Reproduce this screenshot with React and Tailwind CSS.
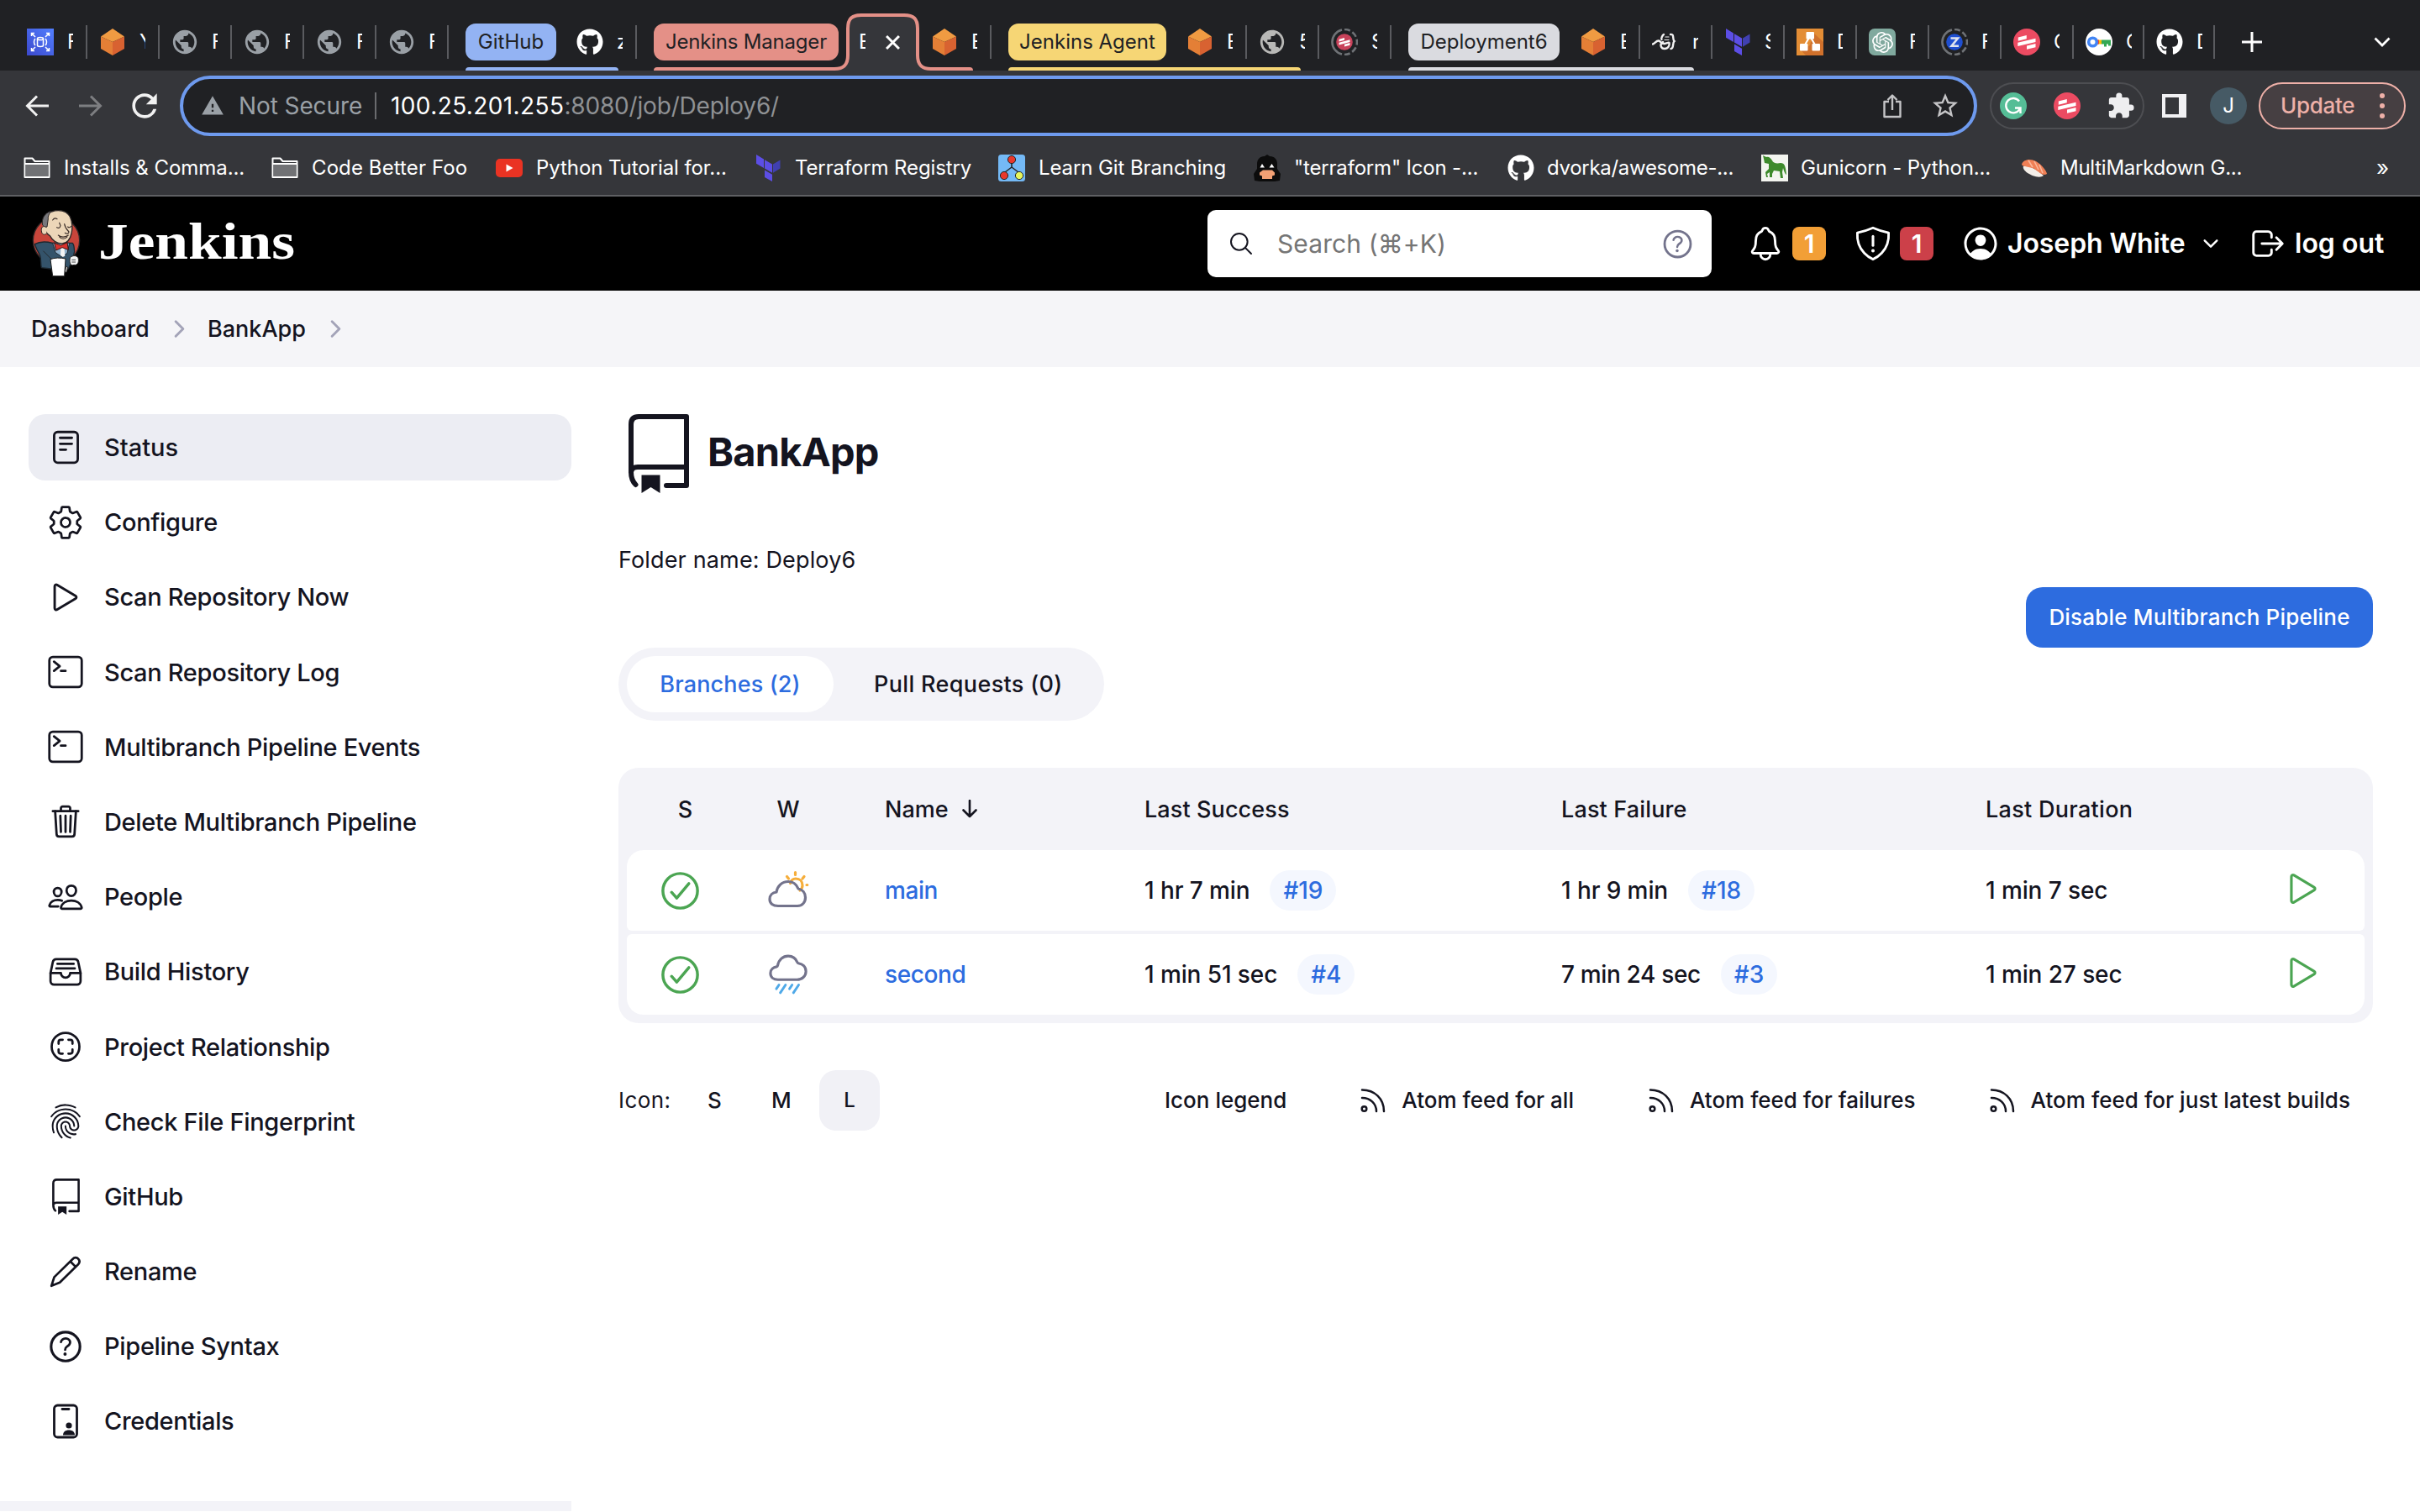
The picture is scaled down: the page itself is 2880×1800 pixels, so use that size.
import React from 'react';
import {
  IoReaderOutline, IoSettingsOutline, IoPlayOutline, IoTerminalOutline, IoTrashOutline, IoPeopleOutline,
  IoFileTrayFullOutline, IoScanCircleOutline, IoFingerPrintOutline, IoHelpCircleOutline,
  IoSearchOutline, IoNotificationsOutline, IoPersonCircleOutline, IoLogOutOutline, IoCheckmarkCircleOutline,
  IoChevronForwardOutline, IoChevronDownOutline,
} from 'react-icons/io5';
import { MdPublic, MdExtension, MdWarning, MdStarBorder, MdRefresh } from 'react-icons/md';
import { SiOpenai } from 'react-icons/si';
import { FaGithub } from 'react-icons/fa';

/* ---------- Browser icons ---------- */

const Globe = ({ light }) => <MdPublic className={light ? 'size-[34px] shrink-0 text-[#b8b8b6]' : 'size-[34px] shrink-0 text-[#9aa0a6]'} />;

const Cube = () => (
  <svg viewBox="0 0 32 32" className="size-8">
    <path d="M16 0 30 9.500 16 16 2 9.500Z" fill="#f09b42" />
    <path d="M2 9.500 16 16V32L2 24Z" fill="#e47f36" />
    <path d="M30 9.500 16 16V32L30 24Z" fill="#d86231" />
  </svg>
);

const Scaling = () => (
  <svg viewBox="0 0 32 32" className="size-8">
    <defs>
      <linearGradient id="scalingFill" x1="0" y1="1" x2="1" y2="0">
        <stop offset="0" stopColor="#3b48cc" />
        <stop offset="1" stopColor="#527fff" />
      </linearGradient>
    </defs>
    <rect width="32" height="32" fill="url(#scalingFill)" />
    <g fill="none" stroke="#fff" strokeWidth="1.5">
      <ellipse cx="16" cy="12" rx="3.5" ry="1.6" />
      <path d="M12.500 12v8c0 2 7 2 7 0v-8M10 12c-2 2-2 6 0 8M22 12c2 2 2 6 0 8" />
      <path d="M5.500 9V5.500H9M5.500 5.500 10 10M23 5.500h3.500V9M26.500 5.500 22 10M5.500 23v3.500H9M5.500 26.500 10 22M23 26.500h3.500V23M26.500 26.500 22 22" />
    </g>
  </svg>
);

const GitHub = () => <FaGithub className="size-8 text-white" />;

const Terraform = () => (
  <svg viewBox="0 0 32 32" className="size-8">
    <path d="M2 0 11 5.500V16L2 10.800ZM12 6.300l9 5.200V21.800l-9-5.200ZM12 18.500l9 5.200V32l-9-5Z" fill="#5c4ee5" />
    <path d="M22 11.500 30.500 6.500V16.600L22 21.800Z" fill="#4040b2" />
  </svg>
);

const Stripes = ({ className = 'size-8' }) => (
  <svg viewBox="0 0 32 32" className={className}>
    <circle cx="16" cy="16" r="16" fill="#ec4b62" />
    <path d="M5.800 10.600 15.800 8v4.200L5.800 14.800ZM5.300 16.800 26.500 11.700v4.200L5.300 21ZM16 20.600 26.500 18v4.200L16 24.800Z" fill="#fff" />
  </svg>
);

const DimStripes = () => (
  <svg viewBox="0 0 32 32" className="size-8">
    <path d="M13 1.400A15 15 0 0 0 13 30.600" fill="none" stroke="#6f7276" strokeWidth="2.600" />
    <path d="M16 1A15 15 0 0 1 16 31" fill="none" stroke="#6f7276" strokeWidth="2.600" strokeDasharray="7 3" />
    <circle cx="16" cy="16" r="9.800" fill="#c8425a" />
    <path d="M9.500 12.800 16 11v2.800l-6.500 1.800ZM9.500 16.800 22.500 13.300v2.800L9.500 19.600ZM16 18.800l6.500-1.800v2.800L16 21.600Z" fill="#fff" />
  </svg>
);

const Zed = () => (
  <svg viewBox="0 0 32 32" className="size-8">
    <path d="M13 1.400A15 15 0 0 0 13 30.600" fill="none" stroke="#6f7276" strokeWidth="2.600" />
    <path d="M16 1A15 15 0 0 1 16 31" fill="none" stroke="#6f7276" strokeWidth="2.600" strokeDasharray="7 3" />
    <circle cx="16" cy="16" r="9.800" fill="#1f4fd0" />
    <path d="M11.500 11.500h8.500L12.500 20.800h8.500" fill="none" stroke="#dfe3ee" strokeWidth="2.600" />
  </svg>
);

const Flask = () => (
  <svg viewBox="0 0 32 32" className="size-8" fill="none" stroke="#f1f1f1" strokeLinecap="round">
    <path d="M1 18.500c3-1 4-4.500 7-4 3 1 3 4 7 3.500 3-.5 5-2 5.500-1 .5 3-1 7-5.500 7-5 0-6-6-2-8" strokeWidth="2.400" />
    <path d="M11.500 13c-1-1 1-5 2.500-6M22 7c5-1 2 6 4.500 8-2.500 2 0 9-4 9" strokeWidth="2.400" />
    <path d="M16 10h4M15 13.500h5" strokeWidth="1.200" />
  </svg>
);

const Diagrams = () => (
  <svg viewBox="0 0 32 32" className="size-8">
    <rect width="32" height="32" fill="#e38d35" />
    <path d="M20 5 32 16v16H11L5 25.500 16 20Z" fill="#d0712c" />
    <path d="M16 9 8.500 22M16 9l7.500 13" stroke="#fff" strokeWidth="2.200" />
    <rect x="11.500" y="4" width="9.500" height="8.500" rx="1" fill="#fff" />
    <rect x="4" y="18" width="9.500" height="8.500" rx="1" fill="#fff" />
    <rect x="18.500" y="18" width="9.500" height="8.500" rx="1" fill="#fff" />
  </svg>
);

const ChatGpt = () => (
  <span className="flex size-8 items-center justify-center rounded-[7px] rounded-br-none bg-[#80a99e]">
    <SiOpenai className="size-[25px] text-white" />
  </span>
);

const Key = () => (
  <svg viewBox="0 0 32 32" className="size-8">
    <circle cx="16" cy="16" r="16" fill="#fff" />
    <path d="M14 13.500h5v5h-5Z" fill="#fbbc04" />
    <path d="M12 13.500h4v5h-4Z" fill="#ea4335" />
    <path d="M19 13.500h11v7h-3v-2h-2v3h-3v-3h-3Z" fill="#34a853" />
    <circle cx="8.500" cy="16" r="4.800" fill="none" stroke="#4285f4" strokeWidth="3.600" />
  </svg>
);

const Folder = () => (
  <svg viewBox="0 0 32 32" className="size-8">
    <path d="M1.500 4.500h9l3 3.500h17v19h-29Z" fill="#35363a" stroke="#fff" strokeWidth="2" strokeLinejoin="round" />
    <path d="M2.500 12h27v14h-27Z" fill="#717275" />
    <path d="M1.500 11h29" stroke="#fff" strokeWidth="2" />
  </svg>
);

const YouTube = () => (
  <svg viewBox="0 0 32 32" className="size-8">
    <rect y="5" width="32" height="22" rx="5" fill="#ea3323" />
    <path d="M12.500 11.500v9l8-4.500Z" fill="#fff" />
  </svg>
);

const GitBranching = () => (
  <svg viewBox="0 0 32 32" className="size-8">
    <rect width="32" height="32" rx="3.500" fill="#74b9f5" />
    <path d="M16 10v5M16 15l-8 6M16 15l8 6" fill="none" stroke="#222" strokeWidth="1.500" />
    <circle cx="16" cy="6" r="4.600" fill="#e8382c" stroke="#222" />
    <circle cx="7" cy="25" r="4.600" fill="#e8382c" stroke="#222" />
    <circle cx="25" cy="25" r="4.600" fill="#e6f65c" stroke="#222" />
  </svg>
);

const Ninja = () => (
  <svg viewBox="0 0 32 32" className="size-8">
    <path d="M13 2l3-2 3 2c6 0 9 4 9 9v6l4 6-1 8-6 1H7l-6-1-1-8 4-6v-6c0-5 3-9 9-9Z" fill="#0c0c0c" />
    <path d="M7.500 15.500 10 11l3 4.500ZM18.500 15.500 21.500 11l3 4.500Z" fill="#fff" />
    <path d="M11 18.500h11l3 3v3l-3 1v3.500H10V25.500l-3-1v-3Z" fill="#f2a074" />
  </svg>
);

const Gunicorn = () => (
  <svg viewBox="0 0 32 32" className="size-8">
    <rect width="32" height="32" fill="#f4f5f0" />
    <path d="M2 1 6 3c3-1 5 1 7 4 1 3 5 4 10 3 5 0 6 4 7 14-2-1-3-5-4-8l-1 5 1 7h-3l-1-8-7-1-2 4v4h-3v-6l-3 2 1 4H6l-1-6 4-4V11L4 10 3 5Z" fill="#3e8a2c" />
  </svg>
);

const Sushi = () => (
  <svg viewBox="0 0 32 32" className="size-8">
    <path d="M4 14c6-2 16 4 24 11-5 4-14 0-19-3-4-3-6-6-5-8Z" fill="#f3eee8" />
    <path d="M2 12C3 6 12 4 19 8c7 4 13 12 13 15-5 3-9-2-15-6C11 14 4 15 2 12Z" fill="#ef7f55" />
    <path d="m10 7 5 8M17 8l5 10M23 12l4 10" stroke="#f9b79b" strokeWidth="1.600" />
  </svg>
);

/* ---------- Browser tab strip ---------- */

const Tab = ({ icon, text, narrow }) => (
  <div className={narrow ? 'flex h-full w-[84px] shrink-0 items-center pl-[14px]' : 'flex h-full w-[86px] shrink-0 items-center pl-[14px]'}>
    <span className="flex size-8 shrink-0 items-center justify-center">{icon}</span>
    <span className="ml-4 w-[7px] overflow-hidden text-[24px] leading-none text-white">{text}</span>
    <span className="ml-auto h-10 w-[2px] bg-[#5a5b5f]" />
  </div>
);

const ActiveTab = () => (
  <div className="relative z-10 ml-[9px] flex h-full w-[87px] shrink-0 items-center pl-[15px]">
    <svg viewBox="0 0 119 68" className="absolute bottom-0 left-[-16px] h-[68px] w-[119px]">
      <path d="M0 66H2C13 66 18 61 18 50V18C18 6 23 2 34 2H85C96 2 101 6 101 18V50C101 61 106 66 117 66H119V68H0Z" fill="#35363a" />
      <path d="M0 66H2C13 66 18 61 18 50V18C18 6 23 2 34 2H85C96 2 101 6 101 18V50C101 61 106 66 117 66H119" fill="none" stroke="#e49087" strokeWidth="4" />
    </svg>
    <span className="relative w-[8px] overflow-hidden text-[24px] leading-none text-white">B</span>
    <svg viewBox="0 0 16 16" className="relative ml-[24px] size-[17px]">
      <path d="m1 1 14 14M15 1 1 15" stroke="#fff" strokeWidth="2.800" />
    </svg>
  </div>
);

const Group = ({ name, pill, line, children }) => (
  <div className="relative ml-5 flex h-full shrink-0 items-center">
    <span className={`flex h-11 shrink-0 items-center justify-center rounded-[12px] text-[24px] leading-none text-[#202124] ${pill}`}>{name}</span>
    {children}
    <span className={`absolute bottom-0 left-0 right-[22px] h-1 rounded-t-[4px] ${line}`} />
  </div>
);

const TabStrip = () => (
  <div className="flex h-[84px] items-end bg-[#202124] pl-[18px]">
    <div className="flex h-[68px] items-center">
      <Tab icon={<Scaling />} text="F" />
      <Tab icon={<Cube />} text="Y" />
      <Tab icon={<Globe />} text="F" />
      <Tab icon={<Globe />} text="F" />
      <Tab icon={<Globe />} text="F" />
      <Tab icon={<Globe />} text="F" />
      <Group name="GitHub" pill="w-[108px] mr-[10px] bg-[#93b3f3]" line="bg-[#93b3f3]">
        <Tab icon={<GitHub />} text="z" />
      </Group>
      <Group name="Jenkins Manager" pill="w-[220px] bg-[#e49087] tracking-[-0.2px]" line="bg-[#e49087]">
        <ActiveTab />
        <Tab icon={<Cube />} text="E" />
      </Group>
      <Group name="Jenkins Agent" pill="w-[188px] mr-[10px] bg-[#f6d675]" line="bg-[#f6d675]">
        <Tab icon={<Cube />} text="E" />
        <Tab icon={<Globe light />} text="5" />
      </Group>
      <Tab icon={<DimStripes />} text="S" />
      <Group name="Deployment6" pill="w-[180px] mr-[10px] bg-[#dadbe0]" line="bg-[#dadbe0]">
        <Tab icon={<Cube />} text="E" />
        <Tab icon={<Flask />} text="r" />
      </Group>
      <Tab icon={<Terraform />} text="S" />
      <Tab icon={<Diagrams />} text="D" />
      <Tab icon={<ChatGpt />} text="F" />
      <Tab icon={<Zed />} text="F" />
      <Tab icon={<Stripes />} text="C" />
      <Tab icon={<Key />} text="C" narrow />
      <Tab icon={<GitHub />} text="D" narrow />
      <svg viewBox="0 0 24 24" className="ml-8 size-6">
        <path d="M12 0v24M0 12h24" stroke="#fff" strokeWidth="3" />
      </svg>
      <svg viewBox="0 0 20 12" className="ml-[133px] h-3 w-5">
        <path d="m1.500 1.500 8.500 8.500 8.500-8.500" fill="none" stroke="#fff" strokeWidth="2.800" />
      </svg>
    </div>
  </div>
);

/* ---------- Browser toolbar ---------- */

const Toolbar = () => (
  <div className="flex h-[84px] items-center pl-[30px]">
    <svg viewBox="0 0 28 26" className="h-[26px] w-7">
      <path d="M28 13H3M14 1.500 2.500 13 14 24.500" fill="none" stroke="#f1f1f1" strokeWidth="3" />
    </svg>
    <svg viewBox="0 0 28 26" className="ml-9 h-[26px] w-7">
      <path d="M0 13h25M14 1.500 25.500 13 14 24.500" fill="none" stroke="#7d7e81" strokeWidth="3" />
    </svg>
    <MdRefresh className="ml-[28px] size-[44px] text-[#f1f1f1]" />
    <div className="ml-[20px] flex h-[72px] w-[2139px] items-center rounded-full border-4 border-[#6e9aee] bg-[#202124] pl-[21px] pr-[16px] text-[28px] leading-none">
      <MdWarning className="size-[28px] text-[#9aa0a6]" />
      <span className="ml-[17px] w-[148px] tracking-[-0.1px] text-[#9aa0a6]">Not Secure</span>
      <span className="ml-[14px] h-8 w-[2px] bg-[#6a6b6e]" />
      <span className="ml-[17px] text-white tracking-[0.4px]">100.25.201.255</span>
      <span className="tracking-[-0.18px] text-[#8f9194]">:8080/job/Deploy6/</span>
      <svg viewBox="0 0 24 30" className="ml-auto h-[30px] w-6">
        <path d="M8 10H2.500v18h19V10H16M12 20V3M6.500 8 12 2.500 17.500 8" fill="none" stroke="#c4c4c6" strokeWidth="2.400" strokeLinejoin="round" />
      </svg>
      <MdStarBorder className="ml-[33px] size-[36px] text-[#c4c4c6]" />
    </div>
    <div className="ml-[15px] flex h-14 w-[184px] items-center rounded-full border-2 border-[#4d4e52] pl-[10px]">
      <svg viewBox="0 0 32 32" className="size-8">
        <circle cx="16" cy="16" r="16" fill="#55bd96" />
        <path d="M23 10.500A8.700 8.700 0 1 0 23.500 20M18 18.500h6.500V25" fill="none" stroke="#fff" strokeWidth="2.400" />
      </svg>
      <Stripes className="ml-8 size-8" />
      <MdExtension className="ml-[31px] size-[34px] text-[#eeeef0]" />
    </div>
    <span className="ml-[21px] flex h-7 w-[29px] items-stretch border-4 border-r-[9px] border-[#f1f1f3]" />
    <span className="ml-[28px] flex size-11 items-center justify-center rounded-full bg-[#465a65] text-[24px] leading-none text-white">J</span>
    <div className="ml-[14px] flex h-14 w-[175px] items-center rounded-full border-2 border-[#eeb0a8] bg-[#463f42] pl-[24px] text-[26px] font-medium leading-none text-[#eeb0a8]">
      <span className="w-[90px] tracking-[-0.3px]">Update</span>
      <svg viewBox="0 0 8 32" className="ml-[27px] h-8 w-2" fill="#eeb0a8">
        <circle cx="4" cy="4" r="3" />
        <circle cx="4" cy="16" r="3" />
        <circle cx="4" cy="28" r="3" />
      </svg>
    </div>
  </div>
);

const bookmarks = [
  [<Folder />, 'Installs & Comma...', 'w-[295px] tracking-[-0.05px]', 'ml-[16px]'],
  [<Folder />, 'Code Better Foo', 'w-[267px] tracking-[0.1px]', 'ml-[16px]'],
  [<YouTube />, 'Python Tutorial for...', 'w-[308px] tracking-[-0.08px]', 'ml-[16px]'],
  [<Terraform />, 'Terraform Registry', 'w-[290px] tracking-[-0.12px]', 'ml-[16px]'],
  [<GitBranching />, 'Learn Git Branching', 'w-[304px] tracking-[-0.1px]', 'ml-[16px]'],
  [<Ninja />, '"terraform" Icon -...', 'w-[302px] tracking-[-0.18px]', 'ml-[16px]'],
  [<GitHub />, 'dvorka/awesome-...', 'w-[302px] tracking-[-0.3px]', 'ml-[15px]'],
  [<Gunicorn />, 'Gunicorn - Python...', 'w-[308px] tracking-[-0.14px]', 'ml-[15px]'],
  [<Sushi />, 'MultiMarkdown G...', 'w-[424px] tracking-[-0.26px]', 'ml-[16px]'],
];

const Bookmarks = () => (
  <div className="flex h-[66px] items-center border-b-2 border-[#5f6063] pl-7">
    {bookmarks.map(([icon, label, width, gap]) => (
      <div key={label} className={`flex shrink-0 items-center ${width}`}>
        <span className="flex size-8 shrink-0">{icon}</span>
        <span className={`whitespace-nowrap text-[24px] leading-none text-white ${gap}`}>{label}</span>
      </div>
    ))}
    <span className="text-[26px] leading-none text-white">»</span>
  </div>
);

/* ---------- Jenkins header ---------- */

const Butler = () => (
  <svg viewBox="0 0 210 300" className="h-[100px] w-[70px]">
    <ellipse cx="111" cy="139" rx="83" ry="84" fill="#c8453b" stroke="#2b2626" strokeWidth="4" />
    <path d="M34 152c14-8 40-10 64-4l70 0c8 6 6 18 8 30l-8 32-14 30H92l-34-4c-4-16 0-30-6-46-8-14-14-26-18-38Z" fill="#34536a" stroke="#1d2830" strokeWidth="4" strokeLinejoin="round" />
    <path d="m98 148 34-2 26 2-8 36-18 14-24-16Z" fill="#8fb0cc" stroke="#1d2830" strokeWidth="3" />
    <path d="M128 150h10l4 44-8 4-8-6Z" fill="#f4f4f4" />
    <path d="M70 100C62 72 70 46 94 36c26-9 54-4 66 18 9 18 9 44 5 60-4 20-16 36-33 36-18 0-34-10-44-28-8-4-14-12-18-22Z" fill="#ecd6b8" stroke="#2b2626" strokeWidth="4" />
    <path d="M62 84c-4-24 6-42 30-50-6 10-12 18-10 28l-4 28-8 2Z" fill="#77777c" stroke="#2b2626" strokeWidth="3" />
    <path d="M76 92c-12-8-20 0-18 12 0 12 10 18 18 10" fill="#ecd6b8" stroke="#2b2626" strokeWidth="3" />
    <path d="M98 66c4-6 10-8 16-4M113 92c6 4 12 2 12-4M122 76l4 10M152 90c4 4 10 2 12-2M140 80c2 12 8 20 16 28 0 8-8 8-14 4M118 120c10 8 24 8 36 0M122 126c6 8 20 10 28 0" fill="none" stroke="#3a2d28" strokeWidth="3.500" strokeLinecap="round" />
    <path d="m104 148 24 8 22-10 4 26-22-8-22 10Z" fill="#d8322d" stroke="#3a1512" strokeWidth="3" strokeLinejoin="round" />
    <path d="M90 206c14-6 36-6 54-2l-4 62H98Z" fill="#fff" stroke="#1b1b1b" strokeWidth="3" />
    <path d="M160 200c10-10 28-8 30 4 2 14-4 24-16 22-10 4-18-4-14-26ZM146 232l6 2-4 18h-6Z" fill="#f5f5f5" stroke="#222" strokeWidth="3" />
    <path d="M166 208h14M166 216h14M64 176l28 28" stroke="#222" strokeWidth="2.500" />
  </svg>
);

const Shield = () => (
  <svg viewBox="0 0 512 512" className="size-[46px]">
    <path d="M463.100 112.370C373.680 96.330 336.710 84.450 256 48c-80.710 36.450-117.680 48.330-207.100 64.370C32.700 369.130 240.580 457.790 256 464c15.420-6.210 223.300-94.870 207.100-351.630Z" fill="none" stroke="#fff" strokeWidth="32" strokeLinejoin="round" />
    <path d="M256 160v120" stroke="#fff" strokeWidth="34" strokeLinecap="round" />
    <circle cx="256" cy="350" r="22" fill="#fff" />
  </svg>
);

const Header = () => (
  <header className="flex h-28 items-center bg-black pl-[30px] text-white">
    <Butler />
    <span className="ml-[17px] w-[1320px] leading-none">
      <span className="relative top-[-3px] inline-block origin-left scale-x-[1.17] font-['Liberation_Serif'] text-[61px] font-bold leading-none">Jenkins</span>
    </span>
    <div className="flex h-20 w-[600px] items-center rounded-[10px] bg-white pl-[24px] pr-[18px]">
      <IoSearchOutline className="size-[32px] text-[#14141f]" />
      <span className="ml-[27px] text-[30px] leading-none tracking-[0.1px] text-[#757575]">Search (⌘+K)</span>
      <IoHelpCircleOutline className="ml-auto size-[45px] text-[#73738c]" />
    </div>
    <IoNotificationsOutline className="ml-[41px] size-[46px]" />
    <span className="ml-[9px] flex h-10 w-10 items-center justify-center rounded-[8px] bg-[#f29f36] text-[30px] font-semibold leading-none">1</span>
    <span className="ml-[33px]"><Shield /></span>
    <span className="ml-[9px] flex h-10 w-10 items-center justify-center rounded-[8px] bg-[#cc4049] text-[30px] font-semibold leading-none">1</span>
    <IoPersonCircleOutline className="ml-[32px] size-[48px]" />
    <span className="ml-[8px] w-[212px] whitespace-nowrap text-[32px] font-semibold leading-none tracking-[-0.1px]">Joseph White</span>
    <IoChevronDownOutline className="ml-[17px] size-[26px]" />
    <IoLogOutOutline className="ml-[32px] size-[46px]" />
    <span className="ml-[9px] text-[32px] font-semibold leading-none">log out</span>
  </header>
);

const Breadcrumbs = () => (
  <nav className="flex h-[91px] items-center bg-[#f5f5f8] pl-[37px] text-[27px] font-[450] leading-none">
    <span className="w-[143px]">Dashboard</span>
    <IoChevronForwardOutline className="ml-[18px] size-[31px] text-[#a3a3b8]" />
    <span className="ml-[18px] w-[118px]">BankApp</span>
    <IoChevronForwardOutline className="ml-[19px] size-[31px] text-[#a3a3b8]" />
  </nav>
);

/* ---------- Side panel ---------- */

const Repo = ({ className, width }) => (
  <svg viewBox="0 0 72 94" className={className} fill="none" stroke="currentColor" strokeWidth={width} strokeLinecap="round" strokeLinejoin="round">
    <path d="M8.500 84C4.500 80 3 76 3 69V12C3 6 6 3 12 3H69V85H45M3 69C4 65 6 63 11 63H69" />
    <path d="M15.500 72.500h22V94l-11-7-11 7Z" fill="currentColor" stroke="none" />
  </svg>
);

const Pencil = () => (
  <svg viewBox="0 0 44 44" className="size-[40px]">
    <path d="M3.500 40.500 7.200 29 31.500 5.200C33.500 3 36.800 3 38.700 5.200c2 2.100 1.800 5-.2 7.200L14.500 36ZM28.300 8.500l7 7" fill="none" stroke="currentColor" strokeWidth="3" strokeLinejoin="round" />
  </svg>
);

const Credentials = () => (
  <svg viewBox="0 0 44 44" className="size-[44px]">
    <rect x="8.500" y="3" width="27" height="38" rx="4" fill="none" stroke="currentColor" strokeWidth="2.800" />
    <path d="M18 7.500h8" stroke="currentColor" strokeWidth="2.800" strokeLinecap="round" />
    <circle cx="26" cy="27" r="3.600" fill="currentColor" />
    <path d="M19 38.500c0-4 3-6 7-6s7 2 7 6Z" fill="currentColor" />
  </svg>
);

const links = [
  [<IoReaderOutline className="size-[45px]" />, 'Status'],
  [<IoSettingsOutline className="size-[44px]" />, 'Configure'],
  [<IoPlayOutline className="size-[46px]" />, 'Scan Repository Now'],
  [<IoTerminalOutline className="size-[44px]" />, 'Scan Repository Log'],
  [<IoTerminalOutline className="size-[44px]" />, 'Multibranch Pipeline Events'],
  [<IoTrashOutline className="size-[44px]" />, 'Delete Multibranch Pipeline'],
  [<IoPeopleOutline className="size-[44px]" />, 'People'],
  [<IoFileTrayFullOutline className="size-[44px]" />, 'Build History'],
  [<IoScanCircleOutline className="size-[44px]" />, 'Project Relationship'],
  [<IoFingerPrintOutline className="size-[44px]" />, 'Check File Fingerprint'],
  [<Repo className="h-[43px] w-[33px]" width={5.6} />, 'GitHub'],
  [<Pencil />, 'Rename'],
  [<IoHelpCircleOutline className="size-[50px]" />, 'Pipeline Syntax'],
  [<Credentials />, 'Credentials'],
];

const SidePanel = () => (
  <aside className="flex w-[680px] shrink-0 flex-col pt-14">
    <div className="flex flex-col gap-[10.2px] pl-[34px]">
      {links.map(([icon, label], i) => (
        <a key={label} className={`flex h-[79px] items-center rounded-[20px] pl-[19px] text-[29px] leading-none ${i === 0 ? 'bg-[#ecedf3] font-medium' : 'font-[450] tracking-[-0.32px]'}`}>
          <span className="flex w-[50px] shrink-0 items-center justify-center">{icon}</span>
          <span className="ml-[21px]">{label}</span>
        </a>
      ))}
    </div>
    <div className="mt-[56px] h-3 bg-[#f3f3f8]" />
  </aside>
);

/* ---------- Main panel ---------- */

const PartlySunny = () => (
  <svg viewBox="0 0 50 50" className="size-[50px]" fill="none" strokeLinecap="round" strokeLinejoin="round" strokeWidth="3.2">
    <path stroke="#f6ae3b" d="M27.500 16.500C28.500 12.500 31 11 34 11c5 0 8 3.500 8 8 0 2.500-1 4.500-3 6M33.500 3.500v3M23.500 8.500l2 2.500M44 8.500l-2 2.500M47 18.500h.8" />
    <path stroke="#73738c" d="M13 43.500C7 43.500 3 40.500 3 35.500c0-5 3.500-8 8-8.500C12 20 17.500 14.500 25 14.500c6 0 10 3.500 12 8.500 5 1 8.500 5 8.500 10.500C45.500 39.500 41.500 43.500 36 43.500Z" />
  </svg>
);

const Rainy = () => (
  <svg viewBox="0 0 512 512" className="size-[50px]" fill="none" strokeLinecap="round" strokeLinejoin="round" strokeWidth="32">
    <path stroke="#73738c" d="M114.610 162.850A16.070 16.070 0 0 0 128 149.600C140.090 76.170 193.110 32 256 32c57.930 0 96.620 37.750 112.200 77.740a15.840 15.840 0 0 0 12.200 9.870c50 8.150 91.600 41.540 91.600 99.590 0 59.400-48.600 100.800-108 100.800H130c-49.500 0-90-24.700-90-79.200 0-48.470 38.670-72.220 74.610-77.950Z" />
    <path stroke="#4fa9e8" strokeWidth="30" d="m144 384-32 48M224 384l-64 96M304 384l-32 48M384 384l-64 96" />
  </svg>
);

const Rss = () => (
  <svg viewBox="0 0 32 32" className="size-[32px]" fill="none" stroke="currentColor" strokeWidth="2.500" strokeLinecap="round">
    <path d="M3 3.500C18 3.500 29 14 29 29M3 13C13 13 20 20 20 29" />
    <circle cx="5.500" cy="26" r="2.800" />
  </svg>
);

const Badge = ({ children }) => (
  <span className="ml-6 flex h-12 items-center rounded-[24px] bg-[#f4f7fe] px-4 text-[#2d6cdf]">{children}</span>
);

const grid = 'grid grid-cols-[127px_130px_359px_496px_505px_300px_1fr] items-center leading-none';

const Row = ({ weather, name, success, sNum, failure, fNum, duration, corners }) => (
  <div className={`${grid} h-24 bg-white text-[28px] font-[450] tracking-[-0.1px] ${corners}`}>
    <span className="flex justify-center"><IoCheckmarkCircleOutline className="size-[55px] text-[#4ba552]" /></span>
    <span className="flex justify-center">{weather}</span>
    <span className="pl-[50px] tracking-[-0.4px] text-[#2d6cdf]">{name}</span>
    <span className="flex items-center">{success}<Badge>{sNum}</Badge></span>
    <span className="flex items-center">{failure}<Badge>{fNum}</Badge></span>
    <span>{duration}</span>
    <span className="flex justify-center pb-1 pl-1"><IoPlayOutline className="size-[50px] text-[#4ba552]" /></span>
  </div>
);

const BuildTable = () => (
  <div className="mt-14 flex h-[304px] w-[2088px] flex-col rounded-[24px] bg-[#f3f3f8] px-[10px] pb-[10px]">
    <div className={`${grid} h-[98px] text-[27px] font-medium`}>
      <span className="pl-[12px] text-center">S</span>
      <span className="text-center">W</span>
      <span className="flex items-center pl-[50px]">
        Name
        <svg viewBox="0 0 20 22" className="ml-[15px] h-[22px] w-5">
          <path d="M10 1v19M2.500 12.500 10 20l7.500-7.500" fill="none" stroke="currentColor" strokeWidth="2.600" strokeLinecap="round" strokeLinejoin="round" />
        </svg>
      </span>
      <span className="tracking-[0.1px]">Last Success</span>
      <span className="tracking-[0.15px]">Last Failure</span>
      <span className="tracking-[0.3px]">Last Duration</span>
    </div>
    <div className="flex flex-col gap-1">
      <Row weather={<PartlySunny />} name="main" success="1 hr 7 min" sNum="#19" failure="1 hr 9 min" fNum="#18" duration="1 min 7 sec" corners="rounded-t-[20px] rounded-b-[6px]" />
      <Row weather={<Rainy />} name="second" success="1 min 51 sec" sNum="#4" failure={<span className="tracking-[-0.35px]">7 min 24 sec</span>} fNum="#3" duration="1 min 27 sec" corners="rounded-t-[6px] rounded-b-[20px]" />
    </div>
  </div>
);

const Main = () => (
  <main className="flex w-[2200px] shrink-0 flex-col pl-14">
    <div className="mt-14 flex h-[94px] items-center pl-3">
      <Repo className="h-[94px] w-[72px]" width={6} />
      <h1 className="relative top-[-3px] ml-[22px] text-[47px] font-bold leading-none tracking-[-0.8px]">BankApp</h1>
    </div>
    <div className="mt-[62px] flex h-[34px] items-center text-[27px] leading-none tracking-[0.15px]">Folder name: Deploy6</div>
    <div className="mt-4 flex w-[2088px] items-start justify-between">
      <div className="mt-[72px] flex h-[87px] w-[578px] items-center rounded-full bg-[#f3f3f8] p-[10px] text-[27px] font-medium leading-none">
        <span className="flex h-[67px] w-[246px] items-center justify-center rounded-full bg-white tracking-[0.15px] text-[#2d6cdf]">Branches (2)</span>
        <span className="ml-[48px] tracking-[0.35px]">Pull Requests (0)</span>
      </div>
      <button className="h-[72px] w-[413px] rounded-[20px] bg-[#2d6cdf] text-[26px] font-medium leading-none tracking-[0.18px] text-white">Disable Multibranch Pipeline</button>
    </div>
    <BuildTable />
    <div className="mt-14 flex h-[72px] w-[2088px] items-center pr-[27px] text-[26px] leading-none">
      <span className="w-[106px] tracking-[0.4px]">Icon:</span>
      <span className="w-[76px] font-[450]">S</span>
      <span className="w-[57px] font-[450]">M</span>
      <span className="flex h-[72px] w-[72px] items-center justify-center rounded-[20px] bg-[#f1f1f6] text-[24px] font-[450]">L</span>
      <div className="ml-auto flex items-center font-[450]">
        <span className="mr-[87px]">Icon legend</span>
        <Rss /><span className="ml-[18px] mr-[88px]">Atom feed for all</span>
        <Rss /><span className="ml-[18px] mr-[88px]">Atom feed for failures</span>
        <Rss /><span className="ml-[17px] tracking-[0.06px]">Atom feed for just latest builds</span>
      </div>
    </div>
  </main>
);

export default function App() {
  return (
    <div className="h-[1800px] w-[2880px] overflow-hidden bg-white font-['Inter','Noto_Sans_CJK_JP',sans-serif] text-[#14141f]">
      <div className="bg-[#35363a]">
        <TabStrip />
        <Toolbar />
        <Bookmarks />
      </div>
      <Header />
      <Breadcrumbs />
      <div className="flex">
        <SidePanel />
        <Main />
      </div>
    </div>
  );
}
